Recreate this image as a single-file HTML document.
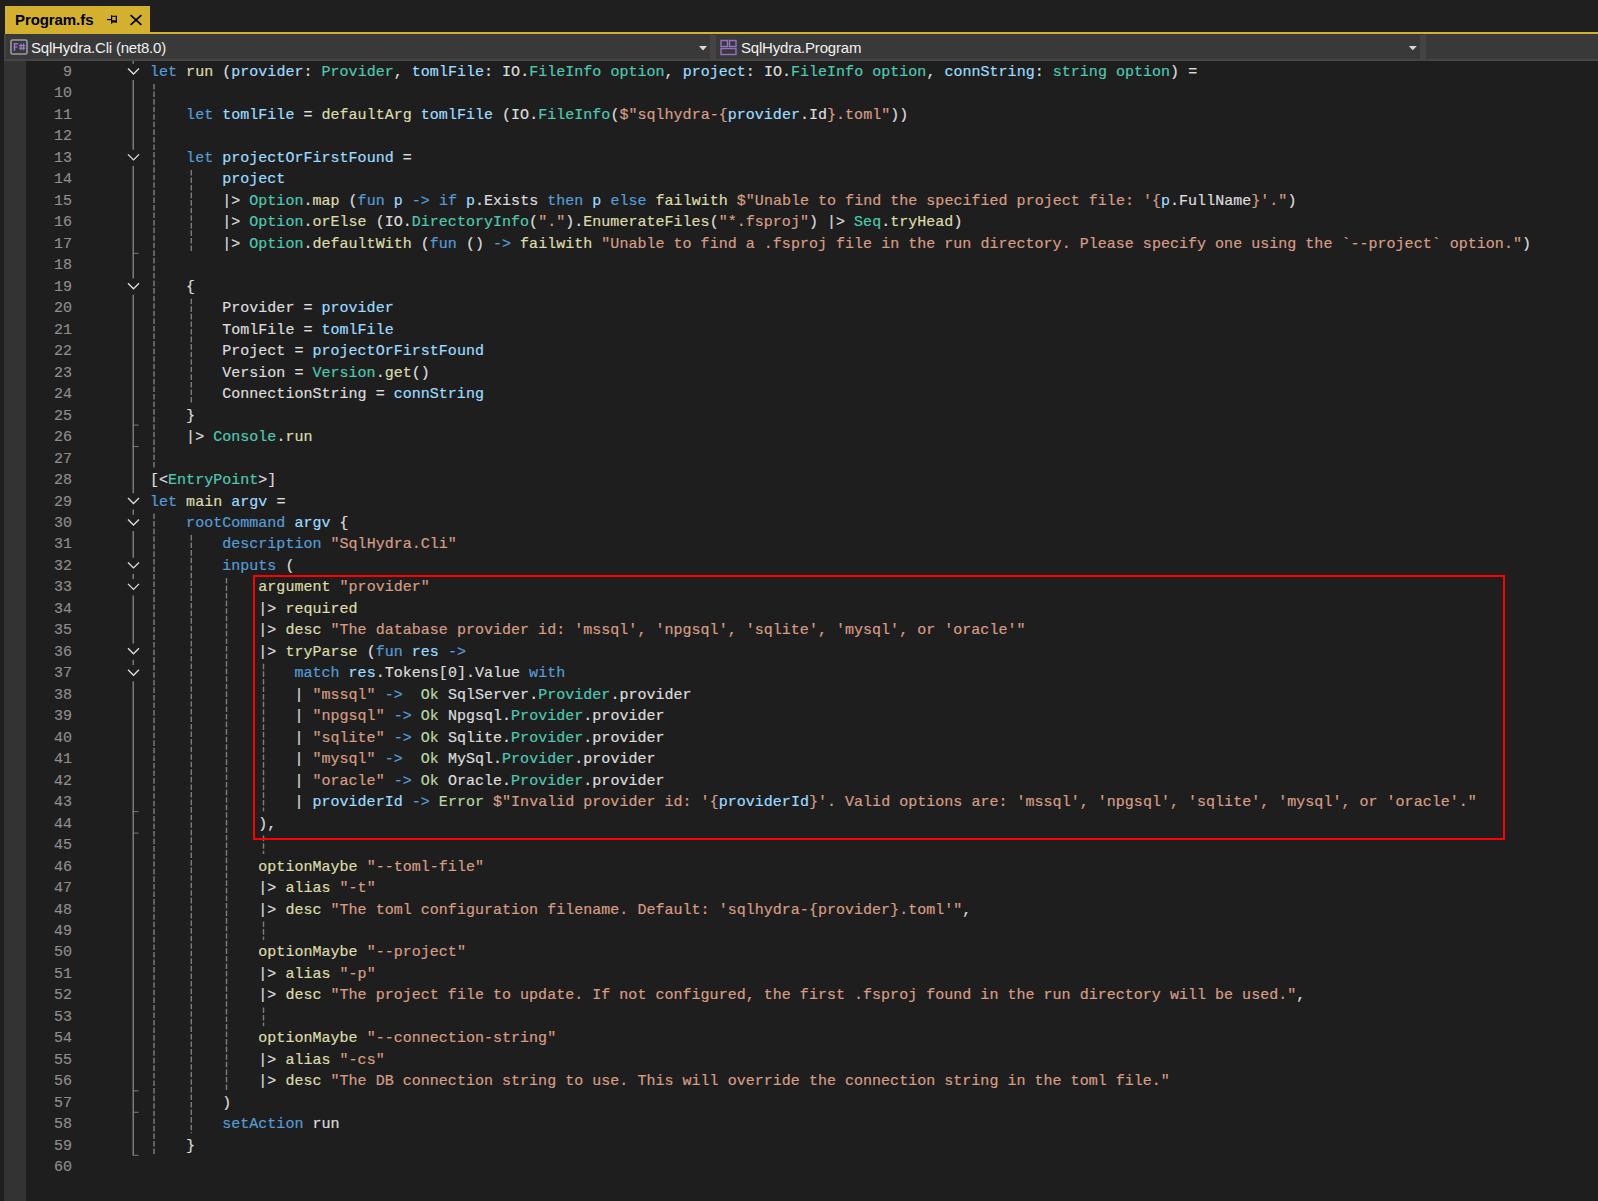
<!DOCTYPE html>
<html><head><meta charset="utf-8">
<style>
html,body{margin:0;padding:0;width:1598px;height:1201px;overflow:hidden;background:#1e1e1e;}
body{position:relative;font-family:"Liberation Mono",monospace;}
#strip{position:absolute;left:0;top:0;width:1598px;height:34px;background:#1f1f1f}
#leftedge{position:absolute;left:0;top:0;width:4px;height:1201px;background:#1c1c1c}
.tab{position:absolute;left:5px;top:6px;width:145px;height:28px;background:#d3b12f}
.accent{position:absolute;left:5px;top:32px;width:1593px;height:2px;background:#d3b12f}
.tabtitle{position:absolute;left:15px;top:7.6px;font:bold 15px/24px "Liberation Sans",sans-serif;color:#000;letter-spacing:-0.08px}
#nav{position:absolute;left:4px;top:34px;width:1594px;height:27px;background:#393939}
#navb{position:absolute;left:4px;top:59px;width:1594px;height:2px;background:#464646}
#navl{position:absolute;left:4px;top:34px;width:2px;height:27px;background:#444}
.sep{position:absolute;top:35px;width:6px;height:24px;background:#444}
.navtxt{position:absolute;top:37px;font:15px/22px "Liberation Sans",sans-serif;color:#f0f0f0;letter-spacing:-0.2px}
#gutter{position:absolute;left:4px;top:61px;width:22px;height:1140px;background:#333333}
.ln{position:absolute;left:26px;width:46px;text-align:right;font-size:15px;line-height:21.475px;color:#8e8e8e;white-space:pre;-webkit-text-stroke:0.15px currentColor}
.cl{position:absolute;left:150px;font-size:15px;line-height:21.475px;color:#dcdcdc;white-space:pre;letter-spacing:0.024px;-webkit-text-stroke:0.2px currentColor}
b{font-weight:normal}
.k{color:#569cd6}.f{color:#dcdcaa}.p{color:#9cdcfe}.t{color:#4ec9b0}.s{color:#d69d85}.u{color:#b8d7a3}
svg{position:absolute;left:0;top:0}
.cv{fill:none;stroke:#e0e0e0;stroke-width:1.3}
.ol{fill:#7a7a7a}
.gd{stroke:#7a7a7a;stroke-width:1.45;stroke-dasharray:5.6 1.96}
#redbox{position:absolute;left:253px;top:575px;width:1248px;height:261px;border:2px solid #ff0000}
</style></head><body>
<div id="strip"></div>
<div class="tab"></div>
<div class="accent"></div>
<div class="tabtitle">Program.fs</div>
<svg width="1598" height="60" style="top:0">
  <!-- pin -->
  <rect x="107" y="19" width="4.5" height="1.2" fill="#000"/>
  <rect x="111" y="15.2" width="1.2" height="8.5" fill="#000"/>
  <rect x="112" y="15.8" width="5" height="1" fill="#000"/>
  <rect x="115.7" y="15.8" width="1.3" height="6.7" fill="#000"/>
  <rect x="112" y="20.3" width="5" height="2.2" fill="#000"/>
  <!-- close -->
  <path d="M130.6 15.2 L141.4 24.8 M141.4 15.2 L130.6 24.8" stroke="#000" stroke-width="1.7"/>
</svg>
<div id="nav"></div>
<div id="navb"></div>
<div id="navl"></div>
<div class="sep" style="left:710px"></div>
<div class="sep" style="left:1420px"></div>
<svg width="1598" height="62" style="top:0">
  <rect x="11" y="40" width="16" height="14" rx="1.5" fill="#383838" stroke="#9c9c9c" stroke-width="1.6"/>
  <g fill="#a07ad6"><rect x="13.8" y="43.2" width="1.4" height="7.6"/><rect x="13.8" y="43.2" width="4.3" height="1.3"/><rect x="13.8" y="46.4" width="3.7" height="1.2"/>
  <rect x="20.4" y="43.4" width="1.2" height="6.8"/><rect x="23" y="43.4" width="1.2" height="6.8"/><rect x="19" y="45" width="6.2" height="1.2"/><rect x="19" y="47.6" width="6.2" height="1.2"/></g>
  <path d="M699 46 L707 46 L703 50.5Z" fill="#d8d8d8"/>
  <path d="M1408.8 46 L1416.8 46 L1412.8 50.3Z" fill="#d8d8d8"/>
  <rect x="721" y="40.5" width="6.5" height="6" fill="none" stroke="#9272c6" stroke-width="1.4"/>
  <rect x="729.5" y="40.5" width="6.5" height="6" fill="none" stroke="#9272c6" stroke-width="1.4"/>
  <rect x="721" y="48.5" width="15" height="6" fill="none" stroke="#9272c6" stroke-width="1.4"/>
</svg>
<div class="navtxt" style="left:31px">SqlHydra.Cli (net8.0)</div>
<div class="navtxt" style="left:741px">SqlHydra.Program</div>
<div id="gutter"></div>
<div class="ln" style="top:62.00px">9</div>
<div class="cl" style="top:62.00px"><b class="k">let</b> <b class="f">run</b> (<b class="p">provider</b>: <b class="t">Provider</b>, <b class="p">tomlFile</b>: IO.<b class="t">FileInfo</b> <b class="t">option</b>, <b class="p">project</b>: IO.<b class="t">FileInfo</b> <b class="t">option</b>, <b class="p">connString</b>: <b class="t">string</b> <b class="t">option</b>) =</div>
<div class="ln" style="top:83.47px">10</div>
<div class="ln" style="top:104.95px">11</div>
<div class="cl" style="top:104.95px">    <b class="k">let</b> <b class="p">tomlFile</b> = <b class="f">defaultArg</b> <b class="p">tomlFile</b> (IO.<b class="t">FileInfo</b>(<b class="s">$&quot;sqlhydra-{</b><b class="p">provider</b>.Id<b class="s">}.toml&quot;</b>))</div>
<div class="ln" style="top:126.43px">12</div>
<div class="ln" style="top:147.90px">13</div>
<div class="cl" style="top:147.90px">    <b class="k">let</b> <b class="p">projectOrFirstFound</b> =</div>
<div class="ln" style="top:169.38px">14</div>
<div class="cl" style="top:169.38px">        <b class="p">project</b></div>
<div class="ln" style="top:190.85px">15</div>
<div class="cl" style="top:190.85px">        |&gt; <b class="t">Option</b>.<b class="f">map</b> (<b class="k">fun</b> <b class="p">p</b> <b class="k">-&gt;</b> <b class="k">if</b> <b class="p">p</b>.Exists <b class="k">then</b> <b class="p">p</b> <b class="k">else</b> <b class="f">failwith</b> <b class="s">$&quot;Unable to find the specified project file: &#x27;{</b><b class="p">p</b>.FullName<b class="s">}&#x27;.&quot;</b>)</div>
<div class="ln" style="top:212.33px">16</div>
<div class="cl" style="top:212.33px">        |&gt; <b class="t">Option</b>.<b class="f">orElse</b> (IO.<b class="t">DirectoryInfo</b>(<b class="s">&quot;.&quot;</b>).<b class="f">EnumerateFiles</b>(<b class="s">&quot;*.fsproj&quot;</b>) |&gt; <b class="t">Seq</b>.<b class="f">tryHead</b>)</div>
<div class="ln" style="top:233.80px">17</div>
<div class="cl" style="top:233.80px">        |&gt; <b class="t">Option</b>.<b class="f">defaultWith</b> (<b class="k">fun</b> () <b class="k">-&gt;</b> <b class="f">failwith</b> <b class="s">&quot;Unable to find a .fsproj file in the run directory. Please specify one using the `--project` option.&quot;</b>)</div>
<div class="ln" style="top:255.28px">18</div>
<div class="ln" style="top:276.75px">19</div>
<div class="cl" style="top:276.75px">    {</div>
<div class="ln" style="top:298.23px">20</div>
<div class="cl" style="top:298.23px">        Provider = <b class="p">provider</b></div>
<div class="ln" style="top:319.70px">21</div>
<div class="cl" style="top:319.70px">        TomlFile = <b class="p">tomlFile</b></div>
<div class="ln" style="top:341.18px">22</div>
<div class="cl" style="top:341.18px">        Project = <b class="p">projectOrFirstFound</b></div>
<div class="ln" style="top:362.65px">23</div>
<div class="cl" style="top:362.65px">        Version = <b class="t">Version</b>.<b class="f">get</b>()</div>
<div class="ln" style="top:384.12px">24</div>
<div class="cl" style="top:384.12px">        ConnectionString = <b class="p">connString</b></div>
<div class="ln" style="top:405.60px">25</div>
<div class="cl" style="top:405.60px">    }</div>
<div class="ln" style="top:427.08px">26</div>
<div class="cl" style="top:427.08px">    |&gt; <b class="t">Console</b>.<b class="f">run</b></div>
<div class="ln" style="top:448.55px">27</div>
<div class="ln" style="top:470.03px">28</div>
<div class="cl" style="top:470.03px">[&lt;<b class="t">EntryPoint</b>&gt;]</div>
<div class="ln" style="top:491.50px">29</div>
<div class="cl" style="top:491.50px"><b class="k">let</b> <b class="f">main</b> <b class="p">argv</b> =</div>
<div class="ln" style="top:512.98px">30</div>
<div class="cl" style="top:512.98px">    <b class="k">rootCommand</b> <b class="p">argv</b> {</div>
<div class="ln" style="top:534.45px">31</div>
<div class="cl" style="top:534.45px">        <b class="k">description</b> <b class="s">&quot;SqlHydra.Cli&quot;</b></div>
<div class="ln" style="top:555.92px">32</div>
<div class="cl" style="top:555.92px">        <b class="k">inputs</b> (</div>
<div class="ln" style="top:577.40px">33</div>
<div class="cl" style="top:577.40px">            <b class="f">argument</b> <b class="s">&quot;provider&quot;</b></div>
<div class="ln" style="top:598.88px">34</div>
<div class="cl" style="top:598.88px">            |&gt; <b class="f">required</b></div>
<div class="ln" style="top:620.35px">35</div>
<div class="cl" style="top:620.35px">            |&gt; <b class="f">desc</b> <b class="s">&quot;The database provider id: &#x27;mssql&#x27;, &#x27;npgsql&#x27;, &#x27;sqlite&#x27;, &#x27;mysql&#x27;, or &#x27;oracle&#x27;&quot;</b></div>
<div class="ln" style="top:641.83px">36</div>
<div class="cl" style="top:641.83px">            |&gt; <b class="f">tryParse</b> (<b class="k">fun</b> <b class="p">res</b> <b class="k">-&gt;</b></div>
<div class="ln" style="top:663.30px">37</div>
<div class="cl" style="top:663.30px">                <b class="k">match</b> <b class="p">res</b>.Tokens[0].Value <b class="k">with</b></div>
<div class="ln" style="top:684.78px">38</div>
<div class="cl" style="top:684.78px">                | <b class="s">&quot;mssql&quot;</b> <b class="k">-&gt;</b>  <b class="u">Ok</b> SqlServer.<b class="t">Provider</b>.provider</div>
<div class="ln" style="top:706.25px">39</div>
<div class="cl" style="top:706.25px">                | <b class="s">&quot;npgsql&quot;</b> <b class="k">-&gt;</b> <b class="u">Ok</b> Npgsql.<b class="t">Provider</b>.provider</div>
<div class="ln" style="top:727.73px">40</div>
<div class="cl" style="top:727.73px">                | <b class="s">&quot;sqlite&quot;</b> <b class="k">-&gt;</b> <b class="u">Ok</b> Sqlite.<b class="t">Provider</b>.provider</div>
<div class="ln" style="top:749.20px">41</div>
<div class="cl" style="top:749.20px">                | <b class="s">&quot;mysql&quot;</b> <b class="k">-&gt;</b>  <b class="u">Ok</b> MySql.<b class="t">Provider</b>.provider</div>
<div class="ln" style="top:770.68px">42</div>
<div class="cl" style="top:770.68px">                | <b class="s">&quot;oracle&quot;</b> <b class="k">-&gt;</b> <b class="u">Ok</b> Oracle.<b class="t">Provider</b>.provider</div>
<div class="ln" style="top:792.15px">43</div>
<div class="cl" style="top:792.15px">                | <b class="p">providerId</b> <b class="k">-&gt;</b> <b class="u">Error</b> <b class="s">$&quot;Invalid provider id: &#x27;{</b><b class="p">providerId</b><b class="s">}&#x27;. Valid options are: &#x27;mssql&#x27;, &#x27;npgsql&#x27;, &#x27;sqlite&#x27;, &#x27;mysql&#x27;, or &#x27;oracle&#x27;.&quot;</b></div>
<div class="ln" style="top:813.62px">44</div>
<div class="cl" style="top:813.62px">            ),</div>
<div class="ln" style="top:835.10px">45</div>
<div class="ln" style="top:856.58px">46</div>
<div class="cl" style="top:856.58px">            <b class="f">optionMaybe</b> <b class="s">&quot;--toml-file&quot;</b></div>
<div class="ln" style="top:878.05px">47</div>
<div class="cl" style="top:878.05px">            |&gt; <b class="f">alias</b> <b class="s">&quot;-t&quot;</b></div>
<div class="ln" style="top:899.53px">48</div>
<div class="cl" style="top:899.53px">            |&gt; <b class="f">desc</b> <b class="s">&quot;The toml configuration filename. Default: &#x27;sqlhydra-{provider}.toml&#x27;&quot;</b>,</div>
<div class="ln" style="top:921.00px">49</div>
<div class="ln" style="top:942.48px">50</div>
<div class="cl" style="top:942.48px">            <b class="f">optionMaybe</b> <b class="s">&quot;--project&quot;</b></div>
<div class="ln" style="top:963.95px">51</div>
<div class="cl" style="top:963.95px">            |&gt; <b class="f">alias</b> <b class="s">&quot;-p&quot;</b></div>
<div class="ln" style="top:985.43px">52</div>
<div class="cl" style="top:985.43px">            |&gt; <b class="f">desc</b> <b class="s">&quot;The project file to update. If not configured, the first .fsproj found in the run directory will be used.&quot;</b>,</div>
<div class="ln" style="top:1006.90px">53</div>
<div class="ln" style="top:1028.38px">54</div>
<div class="cl" style="top:1028.38px">            <b class="f">optionMaybe</b> <b class="s">&quot;--connection-string&quot;</b></div>
<div class="ln" style="top:1049.85px">55</div>
<div class="cl" style="top:1049.85px">            |&gt; <b class="f">alias</b> <b class="s">&quot;-cs&quot;</b></div>
<div class="ln" style="top:1071.33px">56</div>
<div class="cl" style="top:1071.33px">            |&gt; <b class="f">desc</b> <b class="s">&quot;The DB connection string to use. This will override the connection string in the toml file.&quot;</b></div>
<div class="ln" style="top:1092.80px">57</div>
<div class="cl" style="top:1092.80px">        )</div>
<div class="ln" style="top:1114.28px">58</div>
<div class="cl" style="top:1114.28px">        <b class="k">setAction</b> run</div>
<div class="ln" style="top:1135.75px">59</div>
<div class="cl" style="top:1135.75px">    }</div>
<div class="ln" style="top:1157.23px">60</div>
<svg width="1598" height="1201">
<path d="M128.0 68.50 L133.5 74.00 L139.0 68.50" class="cv"/>
<path d="M128.0 154.40 L133.5 159.90 L139.0 154.40" class="cv"/>
<path d="M128.0 283.25 L133.5 288.75 L139.0 283.25" class="cv"/>
<path d="M128.0 498.00 L133.5 503.50 L139.0 498.00" class="cv"/>
<path d="M128.0 519.48 L133.5 524.98 L139.0 519.48" class="cv"/>
<path d="M128.0 562.42 L133.5 567.92 L139.0 562.42" class="cv"/>
<path d="M128.0 583.90 L133.5 589.40 L139.0 583.90" class="cv"/>
<path d="M128.0 648.33 L133.5 653.83 L139.0 648.33" class="cv"/>
<path d="M128.0 669.80 L133.5 675.30 L139.0 669.80" class="cv"/>
<rect x="132.5" y="61.00" width="1.5" height="2.75" class="ol"/>
<rect x="132.5" y="80.00" width="1.5" height="69.65" class="ol"/>
<rect x="132.5" y="165.90" width="1.5" height="112.60" class="ol"/>
<rect x="132.5" y="294.75" width="1.5" height="198.50" class="ol"/>
<rect x="132.5" y="509.50" width="1.5" height="5.23" class="ol"/>
<rect x="132.5" y="530.98" width="1.5" height="26.70" class="ol"/>
<rect x="132.5" y="573.92" width="1.5" height="5.23" class="ol"/>
<rect x="132.5" y="595.40" width="1.5" height="48.17" class="ol"/>
<rect x="132.5" y="659.83" width="1.5" height="5.23" class="ol"/>
<rect x="132.5" y="681.30" width="1.5" height="473.92" class="ol"/>
<rect x="132.5" y="252.78" width="6" height="1" class="ol"/>
<rect x="132.5" y="424.58" width="6" height="1" class="ol"/>
<rect x="132.5" y="446.05" width="6" height="1" class="ol"/>
<rect x="132.5" y="811.13" width="6" height="1" class="ol"/>
<rect x="132.5" y="832.60" width="6" height="1" class="ol"/>
<rect x="132.5" y="1090.30" width="6" height="1" class="ol"/>
<rect x="132.5" y="1111.78" width="6" height="1" class="ol"/>
<rect x="132.5" y="1154.72" width="6" height="1" class="ol"/>
<line x1="154.00" y1="83.97" x2="154.00" y2="467.53" class="gd"/>
<line x1="191.30" y1="169.88" x2="191.30" y2="252.78" class="gd"/>
<line x1="191.30" y1="298.73" x2="191.30" y2="403.10" class="gd"/>
<line x1="154.00" y1="513.48" x2="154.00" y2="1154.72" class="gd"/>
<line x1="191.30" y1="534.95" x2="191.30" y2="1133.25" class="gd"/>
<line x1="226.50" y1="577.90" x2="226.50" y2="1090.30" class="gd"/>
<line x1="263.50" y1="663.80" x2="263.50" y2="811.13" class="gd"/>
<line x1="263.50" y1="835.60" x2="263.50" y2="854.08" class="gd"/>
<line x1="263.50" y1="921.50" x2="263.50" y2="939.98" class="gd"/>
<line x1="263.50" y1="1007.40" x2="263.50" y2="1025.88" class="gd"/>
</svg>
<div id="redbox"></div>
</body></html>
